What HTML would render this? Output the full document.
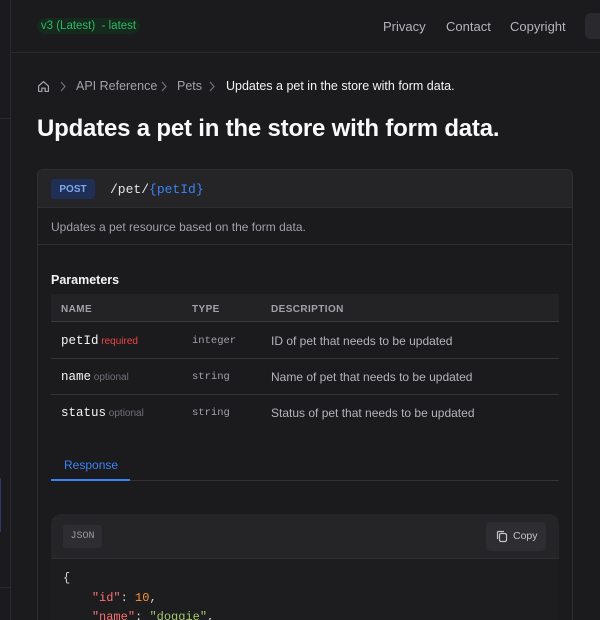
<!DOCTYPE html>
<html><head><meta charset="utf-8"><style>
*{box-sizing:border-box;margin:0;padding:0}
html,body{width:600px;height:620px;overflow:hidden}
body{background:#1b1b1e;font-family:"Liberation Sans",sans-serif;color:#e4e4e7;position:relative}
.mono{font-family:"Liberation Mono",monospace}
.abs{position:absolute}
</style></head><body>
<div class="abs" style="left:10px;top:0;width:1px;height:620px;background:#2a2a2e"></div>
<div class="abs" style="left:0;top:118px;width:10px;height:1px;background:#2a2a2e"></div>
<div class="abs" style="left:0;top:587px;width:10px;height:1px;background:#2a2a2e"></div>
<div class="abs" style="left:0;top:478px;width:1px;height:54px;background:#2a3a66"></div>
<div class="abs" style="left:10px;top:52px;width:590px;height:1px;background:#2a2a2e"></div>
<div class="abs" style="left:37px;top:18px;width:103px;height:16px;border-radius:8px;background:#15291d;color:#2fb865;font-size:11.5px;line-height:16px;text-align:center">v3 (Latest) &nbsp;- latest</div>
<div class="abs" style="left:383px;top:19px;font-size:13px;color:#b4b4ba">Privacy</div>
<div class="abs" style="left:446px;top:19px;font-size:13px;color:#b4b4ba">Contact</div>
<div class="abs" style="left:510px;top:19px;font-size:13px;color:#b4b4ba">Copyright</div>
<div class="abs" style="left:585px;top:13px;width:30px;height:26px;border-radius:6px;background:#2a2a2e"></div>
<svg class="abs" style="left:37px;top:80px" width="13" height="13" viewBox="0 0 24 24" fill="none" stroke="#b4b4ba" stroke-width="2"><path d="M3 11l9-8 9 8v10h-6v-6h-6v6H3z"/></svg>
<svg class="abs" style="left:59px;top:81px" width="8" height="11" viewBox="0 0 8 11" fill="none" stroke="#71717a" stroke-width="1.2"><path d="M2 1l4 4.5L2 10"/></svg>
<svg class="abs" style="left:160px;top:81px" width="8" height="11" viewBox="0 0 8 11" fill="none" stroke="#71717a" stroke-width="1.2"><path d="M2 1l4 4.5L2 10"/></svg>
<svg class="abs" style="left:208px;top:81px" width="8" height="11" viewBox="0 0 8 11" fill="none" stroke="#71717a" stroke-width="1.2"><path d="M2 1l4 4.5L2 10"/></svg>
<div class="abs" style="left:0;top:79px;font-size:12.5px;color:#a1a1aa;white-space:nowrap">
<span class="abs" style="left:76px">API Reference</span><span class="abs" style="left:177px">Pets</span><span class="abs" style="left:226px;color:#f4f4f5">Updates a pet in the store with form data.</span></div>
<div class="abs" style="left:37px;top:115px;font-size:24px;font-weight:bold;color:#fafafa;letter-spacing:-0.2px">Updates a pet in the store with form data.</div>
<div class="abs" style="left:37px;top:169px;width:536px;height:451px;border:1px solid #2f2f33;border-bottom:none;border-radius:6px 6px 0 0;background:#1b1b1e;overflow:hidden">
 <div style="height:38px;background:#252528;border-bottom:1px solid #2f2f33;position:relative">
  <div class="abs" style="left:13px;top:9px;width:44px;height:20px;background:#1f2f55;border-radius:3px;color:#7fa8ee;font-size:10px;font-weight:bold;line-height:21px;text-align:center">POST</div>
  <div class="abs mono" style="left:72px;top:12px;font-size:13px;color:#e4e4e7">/pet/<span style="color:#3b82f6">{petId}</span></div>
 </div>
 <div style="height:37px;border-bottom:1px solid #2f2f33;font-size:12px;color:#a1a1aa;padding:12px 13px">Updates a pet resource based on the form data.</div>
 <div class="abs" style="left:13px;top:103px;font-size:12.5px;font-weight:bold;color:#f4f4f5">Parameters</div>
 <div class="abs" style="left:13px;top:124px;width:508px;height:28px;background:#232326;border-bottom:1px solid #3a3a3f;font-size:10px;color:#a1a1aa;font-weight:bold;letter-spacing:.4px">
  <span class="abs" style="left:10px;top:10px">NAME</span><span class="abs" style="left:141px;top:10px">TYPE</span><span class="abs" style="left:220px;top:10px">DESCRIPTION</span></div>
 <div class="abs" style="left:13px;top:152px;width:508px;height:37px;border-bottom:1px solid #333337">
  <span class="abs mono" style="left:10px;top:12px;font-size:12.5px;color:#f4f4f5">petId<span style="font-family:'Liberation Sans';font-size:10px;color:#ef4444"> required</span></span>
  <span class="abs mono" style="left:141px;top:13px;font-size:10.5px;color:#a1a1aa">integer</span>
  <span class="abs" style="left:220px;top:12px;font-size:12px;color:#b4b4ba">ID of pet that needs to be updated</span></div>
 <div class="abs" style="left:13px;top:189px;width:508px;height:36px;border-bottom:1px solid #333337">
  <span class="abs mono" style="left:10px;top:11px;font-size:12.5px;color:#f4f4f5">name<span style="font-family:'Liberation Sans';font-size:10px;color:#71717a"> optional</span></span>
  <span class="abs mono" style="left:141px;top:12px;font-size:10.5px;color:#a1a1aa">string</span>
  <span class="abs" style="left:220px;top:11px;font-size:12px;color:#b4b4ba">Name of pet that needs to be updated</span></div>
 <div class="abs" style="left:13px;top:225px;width:508px;height:36px">
  <span class="abs mono" style="left:10px;top:11px;font-size:12.5px;color:#f4f4f5">status<span style="font-family:'Liberation Sans';font-size:10px;color:#71717a"> optional</span></span>
  <span class="abs mono" style="left:141px;top:12px;font-size:10.5px;color:#a1a1aa">string</span>
  <span class="abs" style="left:220px;top:11px;font-size:12px;color:#b4b4ba">Status of pet that needs to be updated</span></div>
 <div class="abs" style="left:26px;top:288px;font-size:12px;color:#3b82f6">Response</div>
 <div class="abs" style="left:13px;top:310px;width:508px;height:1px;background:#333337"></div>
 <div class="abs" style="left:13px;top:309px;width:79px;height:2px;background:#3b82f6"></div>
 <div class="abs" style="left:13px;top:344px;width:508px;height:140px;border-radius:10px;background:#1d1d20;overflow:hidden">
  <div style="height:45px;background:#252528;border-bottom:1px solid #2f2f33;position:relative">
   <div class="abs mono" style="left:12px;top:11px;width:39px;height:23px;background:#2e2e32;border-radius:3px;color:#9a9aa1;font-size:10px;line-height:23px;text-align:center">JSON</div>
   <div class="abs" style="left:435px;top:8px;width:60px;height:29px;background:#2e2e32;border-radius:5px;color:#c4c4ca;font-size:10.5px;line-height:29px">
    <svg class="abs" style="left:10px;top:8px" width="12" height="13" viewBox="0 0 12 13" fill="none" stroke="#c4c4ca" stroke-width="1.2"><rect x="3.5" y="3.5" width="7" height="8" rx="1.5"/><path d="M1.5 9V2.5a1 1 0 0 1 1-1H8"/></svg>
    <span class="abs" style="left:27px">Copy</span></div>
  </div>
  <div class="mono" style="font-size:12px;line-height:19.5px;padding:10px 12px;color:#d4d4d8">{<br>&nbsp;&nbsp;&nbsp;&nbsp;<span style="color:#f87171">"id"</span>: <span style="color:#fb923c">10</span>,<br>&nbsp;&nbsp;&nbsp;&nbsp;<span style="color:#f87171">"name"</span>: <span style="color:#a3c76d">"doggie"</span>,</div>
 </div>
</div>
</body></html>
